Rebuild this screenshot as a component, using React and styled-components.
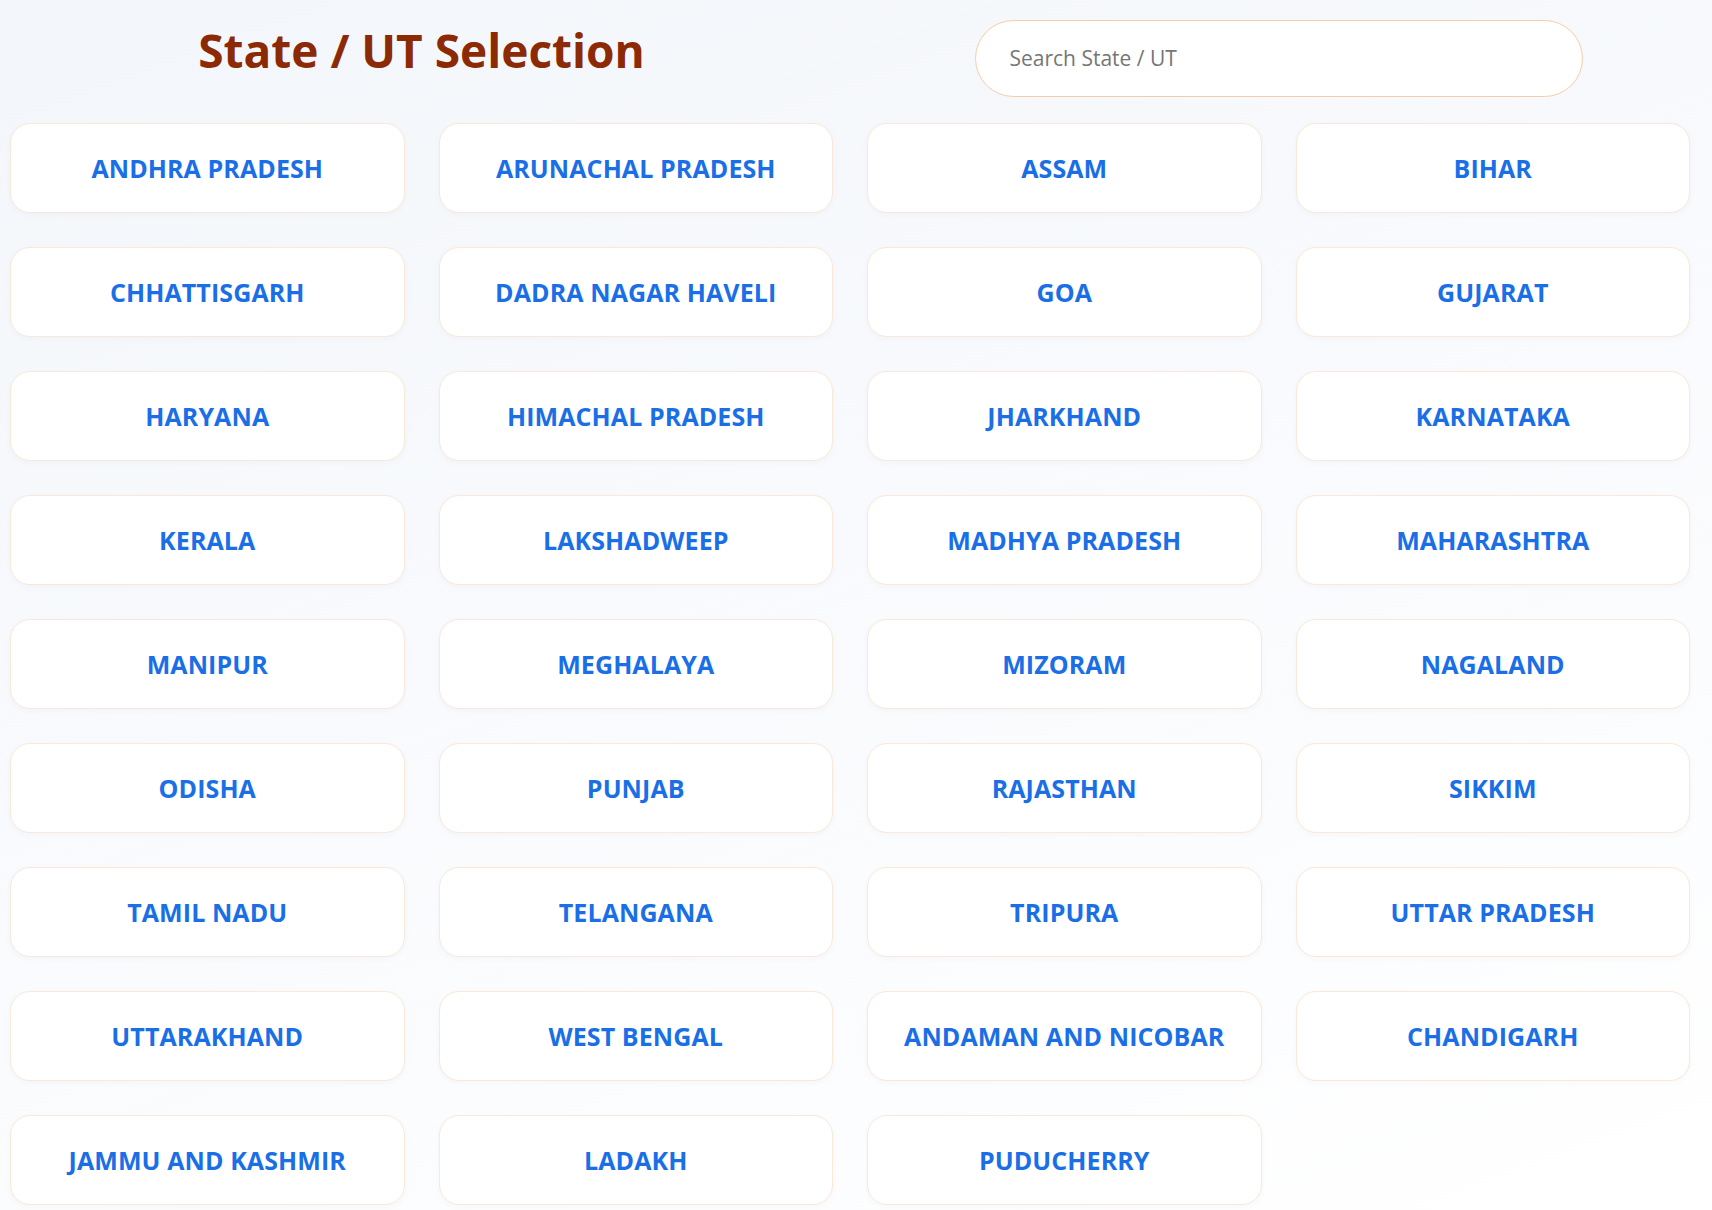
import React from 'react';
import styled, { createGlobalStyle } from 'styled-components';

const states = [
  'ANDHRA PRADESH', 'ARUNACHAL PRADESH', 'ASSAM', 'BIHAR',
  'CHHATTISGARH', 'DADRA NAGAR HAVELI', 'GOA', 'GUJARAT',
  'HARYANA', 'HIMACHAL PRADESH', 'JHARKHAND', 'KARNATAKA',
  'KERALA', 'LAKSHADWEEP', 'MADHYA PRADESH', 'MAHARASHTRA',
  'MANIPUR', 'MEGHALAYA', 'MIZORAM', 'NAGALAND',
  'ODISHA', 'PUNJAB', 'RAJASTHAN', 'SIKKIM',
  'TAMIL NADU', 'TELANGANA', 'TRIPURA', 'UTTAR PRADESH',
  'UTTARAKHAND', 'WEST BENGAL', 'ANDAMAN AND NICOBAR', 'CHANDIGARH',
  'JAMMU AND KASHMIR', 'LADAKH', 'PUDUCHERRY',
];

const GlobalStyle = createGlobalStyle`
  html, body {
    margin: 0;
    padding: 0;
  }
  body {
    font-family: 'Open Sans', 'Noto Sans', sans-serif;
    background: linear-gradient(160deg, #f3f6fa 0%, #f8fafd 45%, #ffffff 100%);
    min-height: 1210px;
  }
`;

const Page = styled.div`
  padding: 19px 22px 0 10px;
`;

const Header = styled.div`
  display: grid;
  grid-template-columns: 1fr 1fr;
  column-gap: 34px;
  align-items: center;
  height: 77px;
  margin-bottom: 27px;
`;

const Title = styled.h1`
  margin: 0 0 16px;
  text-align: center;
  font-size: 46px;
  font-weight: 700;
  color: #8b2a05;
`;

const SearchInput = styled.input`
  justify-self: center;
  width: 608px;
  height: 77px;
  box-sizing: border-box;
  padding: 0 34px;
  border: 1.5px solid #f7cda6;
  border-radius: 40px;
  background: #fff;
  font-family: 'Open Sans', 'Noto Sans', sans-serif;
  font-size: 21px;
  color: #444;
  outline: none;

  &::placeholder {
    color: #767676;
  }
`;

const Grid = styled.div`
  display: grid;
  grid-template-columns: repeat(4, 1fr);
  gap: 34px;
`;

const StateCard = styled.button`
  height: 90px;
  border: 1px solid #fbe8d6;
  border-radius: 20px;
  background: #fff;
  box-shadow: 0 2px 6px rgba(30, 60, 120, 0.03);
  font-family: 'Open Sans', 'Noto Sans', sans-serif;
  font-size: 25px;
  font-weight: 700;
  letter-spacing: 0.1px;
  color: ${(p) => (p.active ? '#8b2a05' : '#1a6fe6')};
  cursor: pointer;
  display: flex;
  align-items: center;
  justify-content: center;
`;

const App = () => {
  const [search, setSearch] = React.useState('');
  const [selected, setSelected] = React.useState(null);

  const filtered = search
    ? states.filter((s) => s.includes(search.toUpperCase()))
    : states;

  return (
    <Page>
      <GlobalStyle />
      <Header>
        <Title>State / UT Selection</Title>
        <SearchInput
          type="text"
          placeholder="Search State / UT"
          value={search}
          onChange={(e) => setSearch(e.target.value)}
        />
      </Header>
      <Grid>
        {filtered.map((name) => (
          <StateCard key={name} active={selected == name} onClick={() => setSelected(name)}>
            {name}
          </StateCard>
        ))}
      </Grid>
    </Page>
  );
};

export default App;
